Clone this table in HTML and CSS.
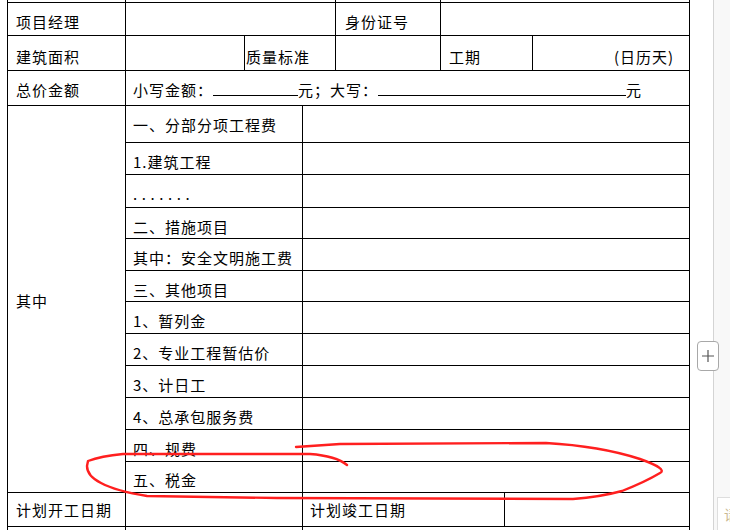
FILE: index.html
```html
<!DOCTYPE html>
<html lang="zh-CN">
<head>
<meta charset="utf-8">
<title>表格</title>
<link rel="stylesheet" href="styles.css">
</head>
<body>
<div class="page">
  <main class="doc">
    <table class="grid">
      <colgroup>
        <col class="c1"><col class="c2"><col class="c3"><col class="c4">
        <col class="c5"><col class="c6"><col class="c7"><col class="c8">
      </colgroup>
      <tr class="ghost"><td></td><td colspan="3"></td><td></td><td colspan="3"></td></tr>
      <tr class="h33">
        <td class="lab">项目经理</td><td colspan="3"></td>
        <td class="lab2">身份证号</td><td colspan="3"></td>
      </tr>
      <tr class="h35 low">
        <td class="lab">建筑面积</td><td></td>
        <td colspan="2" class="tight">质量标准</td><td></td>
        <td colspan="2" class="lab">工期</td><td class="right">(日历天)</td>
      </tr>
      <tr class="h35">
        <td class="lab">总价金额</td>
        <td colspan="7" class="item">小写金额：<span class="blank b1"></span>元；大写：<span class="blank b2"></span>元</td>
      </tr>
      <tr class="h37">
        <td rowspan="12" class="lab mid">其中</td>
        <td colspan="2" class="item">一、分部分项工程费</td><td colspan="5"></td>
      </tr>
      <tr class="h32"><td colspan="2" class="item">1.建筑工程</td><td colspan="5"></td></tr>
      <tr class="h33"><td colspan="2" class="item dots">.......</td><td colspan="5"></td></tr>
      <tr class="h31"><td colspan="2" class="item">二、措施项目</td><td colspan="5"></td></tr>
      <tr class="h32"><td colspan="2" class="item">其中：安全文明施工费</td><td colspan="5"></td></tr>
      <tr class="h31"><td colspan="2" class="item">三、其他项目</td><td colspan="5"></td></tr>
      <tr class="h32"><td colspan="2" class="item">1、暂列金</td><td colspan="5"></td></tr>
      <tr class="h32"><td colspan="2" class="item">2、专业工程暂估价</td><td colspan="5"></td></tr>
      <tr class="h32"><td colspan="2" class="item">3、计日工</td><td colspan="5"></td></tr>
      <tr class="h32"><td colspan="2" class="item">4、总承包服务费</td><td colspan="5"></td></tr>
      <tr class="h32"><td colspan="2" class="item">四、规费</td><td colspan="5"></td></tr>
      <tr class="h31 up"><td colspan="2" class="item">五、税金</td><td colspan="5"></td></tr>
      <tr class="h34 up2">
        <td class="lab">计划开工日期</td><td colspan="2"></td>
        <td colspan="3" class="item">计划竣工日期</td><td colspan="2"></td>
      </tr>
      <tr class="h34"><td></td><td colspan="2"></td><td colspan="5"></td></tr>
    </table>
    <svg class="ink" width="713" height="530" viewBox="0 0 713 530" aria-hidden="true">
      <path d="M296,447 L340,444 L546,443 Q600,446 640,459 Q668,469 660,473 Q645,482 622,491 Q600,497 573,499 L277,498 L147,496 Q116,491 101,483 Q87,476 87,466 L88,461 Q101,456 123,454 L310,454 Q336,456 347,465" fill="none" stroke="#ff1f1f" stroke-width="2.4" stroke-linecap="round" stroke-linejoin="round"/>
    </svg>
  </main>
  <aside class="side">
    <button class="add" type="button" aria-label="添加">
      <svg width="14" height="14" viewBox="0 0 14 14"><path d="M7 1V13M1 7H13" stroke="#555" stroke-width="1.2" fill="none"/></svg>
    </button>
    <div class="hint">请</div>
  </aside>
</div>
</body>
</html>
```
FILE: styles.css
```css
html, body {
  margin: 0;
  padding: 0;
  background: #fff;
}
.page {
  display: flex;
  width: 730px;
  height: 530px;
  overflow: hidden;
  position: relative;
}
.doc {
  position: relative;
  width: 713px;
  flex: none;
  height: 530px;
  overflow: hidden;
}
.grid {
  margin-left: 7px;
  border-collapse: collapse;
  table-layout: fixed;
  width: 683px;
  font-family: "Noto Sans CJK SC", "Noto Sans", sans-serif;
  font-weight: 400;
  font-size: 15px;
  letter-spacing: 1px;
  line-height: 18px;
  color: #000;
}
.c1 { width: 118px; }
.c2 { width: 119px; }
.c3 { width: 58px; }
.c4 { width: 33px; }
.c5 { width: 105px; }
.c6 { width: 64px; }
.c7 { width: 28px; }
.c8 { width: 157px; }
.grid td {
  border: 1px solid #000;
  padding: 10px 0 0 0;
  vertical-align: top;
  white-space: nowrap;
  overflow: hidden;
}
.ghost td {
  border-top: none;
  height: 2px;
  padding: 0;
  line-height: 0;
}
.h31 { height: 31px; }
.h32 { height: 32px; }
.h33 { height: 33px; }
.h34 { height: 34px; }
.h35 { height: 35px; }
.h37 { height: 37px; }
.low td { padding-top: 12px; }
.up td { padding-top: 9px; }
.up2 td { padding-top: 8px; }
.grid td.lab { padding-left: 8px; }
.grid td.lab2 { padding-left: 9px; }
.grid td.item { padding-left: 7px; }
.grid td.tight { padding-left: 1px; }
.grid td.right { text-align: right; padding-right: 15px; }
.grid td.mid { vertical-align: middle; padding-top: 4px; }
.dots { letter-spacing: 4.6px; }
.blank {
  display: inline-block;
  border-bottom: 1px solid #000;
  height: 1px;
  letter-spacing: 0;
}
.b1 { width: 85px; }
.b2 { width: 248px; }
.ink {
  position: absolute;
  left: 0;
  top: 0;
  pointer-events: none;
}
.side {
  flex: 1;
  background: #f8f8f8;
  border-left: 1px solid #d4d4d4;
  position: relative;
}
.add {
  position: absolute;
  left: -17px;
  top: 341px;
  width: 22px;
  height: 30px;
  padding: 0;
  margin: 0;
  background: #fff;
  border: 1px solid #a8a8a8;
  border-radius: 4px;
  display: flex;
  align-items: center;
  justify-content: center;
}
.hint {
  position: absolute;
  left: 3px;
  top: 497px;
  width: 40px;
  height: 40px;
  background: #fff;
  border: 1px solid #dedede;
  box-sizing: border-box;
  padding: 6px 0 0 6px;
  font-family: "Noto Sans CJK SC", sans-serif;
  font-size: 14px;
  color: #c9b892;
}
```
